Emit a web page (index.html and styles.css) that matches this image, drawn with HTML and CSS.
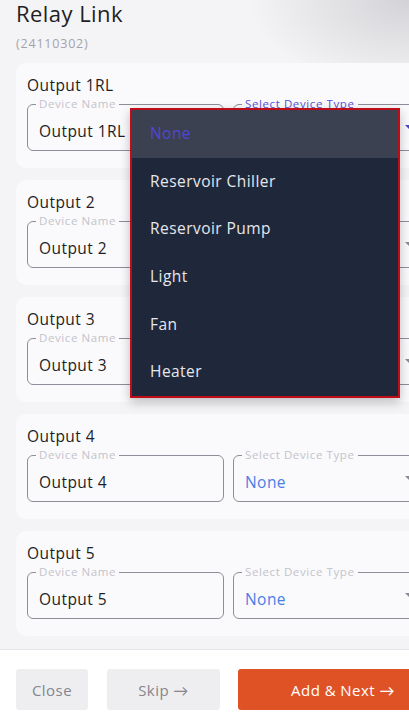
FILE: index.html
```html
<!DOCTYPE html>
<html lang="en">
<head>
<meta charset="utf-8">
<title>Relay Link</title>
<link rel="stylesheet" href="styles.css">
</head>
<body>
<div class="screen">
  <main class="content">
    <header class="head">
      <h1 class="title">Relay Link</h1>
      <div class="serial">(24110302)</div>
    </header>

    <section class="card">
      <h2 class="card-title">Output 1RL</h2>
      <div class="fields">
        <div class="field name">
          <span class="label">Device Name</span>
          <span class="value">Output 1RL</span>
        </div>
        <div class="field type">
          <span class="label focus">Select Device Type</span>
          <span class="value sel">None</span>
          <span class="arrow focus-arrow"></span>
        </div>
      </div>
    </section>

    <section class="card">
      <h2 class="card-title">Output 2</h2>
      <div class="fields">
        <div class="field name">
          <span class="label">Device Name</span>
          <span class="value">Output 2</span>
        </div>
        <div class="field type">
          <span class="label">Select Device Type</span>
          <span class="value sel">None</span>
          <span class="arrow"></span>
        </div>
      </div>
    </section>

    <section class="card">
      <h2 class="card-title">Output 3</h2>
      <div class="fields">
        <div class="field name">
          <span class="label">Device Name</span>
          <span class="value">Output 3</span>
        </div>
        <div class="field type">
          <span class="label">Select Device Type</span>
          <span class="value sel">None</span>
          <span class="arrow"></span>
        </div>
      </div>
    </section>

    <section class="card">
      <h2 class="card-title">Output 4</h2>
      <div class="fields">
        <div class="field name">
          <span class="label">Device Name</span>
          <span class="value">Output 4</span>
        </div>
        <div class="field type">
          <span class="label">Select Device Type</span>
          <span class="value sel">None</span>
          <span class="arrow"></span>
        </div>
      </div>
    </section>

    <section class="card">
      <h2 class="card-title">Output 5</h2>
      <div class="fields">
        <div class="field name">
          <span class="label">Device Name</span>
          <span class="value">Output 5</span>
        </div>
        <div class="field type">
          <span class="label">Select Device Type</span>
          <span class="value sel">None</span>
          <span class="arrow"></span>
        </div>
      </div>
    </section>
  </main>

  <footer class="footer">
    <button class="btn btn-close">Close</button>
    <button class="btn btn-skip">Skip →</button>
    <button class="btn btn-next">Add &amp; Next →</button>
  </footer>

  <ul class="menu">
    <li class="menu-item active">None</li>
    <li class="menu-item">Reservoir Chiller</li>
    <li class="menu-item">Reservoir Pump</li>
    <li class="menu-item">Light</li>
    <li class="menu-item">Fan</li>
    <li class="menu-item">Heater</li>
  </ul>
</div>
</body>
</html>
```
FILE: styles.css
```css
* { box-sizing: border-box; }
html, body {
  margin: 0;
  padding: 0;
  width: 409px;
  height: 721px;
  overflow: hidden;
}
body {
  font-family: "Open Sans", Lato, sans-serif;
  color: #1d1d22;
  background: #f4f4f6;
  letter-spacing: 0.45px;
}
.screen {
  position: relative;
  width: 409px;
  height: 721px;
  overflow: hidden;
  display: flex;
  flex-direction: column;
  background: radial-gradient(ellipse 160px 90px at 409px 0, rgba(150,150,158,0.35), rgba(244,244,246,0) 100%), #f4f4f6;
}
.content {
  flex: 1;
  padding: 0 0 0 16px;
  display: flex;
  flex-direction: column;
  gap: 12px;
}
.head { display: flex; flex-direction: column; margin-bottom: -1px; }
.title {
  margin: 0;
  font-size: 22px;
  font-weight: 500;
  line-height: 26px;
  color: #1e1e24;
}
.serial {
  margin-top: 10px;
  font-size: 12.5px;
  line-height: 16px;
  color: #a3a3ab;
  letter-spacing: 0.8px;
}
.card {
  background: #fafafc;
  border-radius: 10px 0 0 10px;
  padding: 12px 0 17px 11px;
  height: 105px;
  margin-right: -40px;
}
.card-title {
  margin: 0;
  font-size: 15.5px;
  font-weight: 500;
  line-height: 20px;
  color: #1e1e24;
}
.fields {
  display: flex;
  gap: 9px;
  margin-top: 9px;
}
.field {
  position: relative;
  height: 47px;
  border: 1px solid #8e8e98;
  border-radius: 6px;
  padding: 15px 0 0 11px;
  flex: none;
}
.field.name { width: 197px; }
.field.type { width: 210px; }
.label {
  position: absolute;
  top: -9px;
  left: 8px;
  padding: 0 3px;
  font-size: 11.5px;
  line-height: 15px;
  letter-spacing: 0.6px;
  color: #c3c3cb;
  background: #fafafc;
}
.label.focus { color: #5a4fd8; }
.value {
  display: block;
  font-size: 15.5px;
  line-height: 22px;
  color: #1e1e24;
}
.value.sel { color: #4a7ee6; }
.arrow {
  position: absolute;
  top: 20px;
  left: 171px;
  width: 0;
  height: 0;
  border-left: 5px solid transparent;
  border-right: 5px solid transparent;
  border-top: 5px solid #8a8a94;
}
.arrow.focus-arrow { border-top-color: #4b3fd0; }

.footer {
  height: 72px;
  background: #ffffff;
  border-top: 1px solid #e5e5ea;
  display: flex;
  gap: 18px;
  padding: 19px 0 0 16px;
}
.btn {
  height: 41px;
  border: none;
  border-radius: 3px;
  font-family: "Open Sans", Lato, sans-serif;
  font-size: 15px;
  letter-spacing: 0.45px;
  padding: 0;
  flex: none;
}
.btn-close { width: 72px; background: #eeeef1; color: #85858d; }
.btn-skip { width: 113px; background: #eeeef1; color: #85858d; margin-left: 1px; }
.btn-next { width: 210px; background: #df5226; color: #ffffff; font-weight: 500; }

.menu {
  position: absolute;
  left: 130px;
  top: 108px;
  width: 270px;
  margin: 0;
  padding: 0;
  list-style: none;
  background: #1f283b;
  border: 2px solid #c00c16;
  box-shadow: 0 4px 10px rgba(0,0,0,0.25);
}
.menu-item {
  height: 47.7px;
  line-height: 47.7px;
  padding-left: 18px;
  font-size: 15.5px;
  color: #e6e7ec;
}
.menu-item.active {
  background: #3b4151;
  color: #4f45dc;
}
```
